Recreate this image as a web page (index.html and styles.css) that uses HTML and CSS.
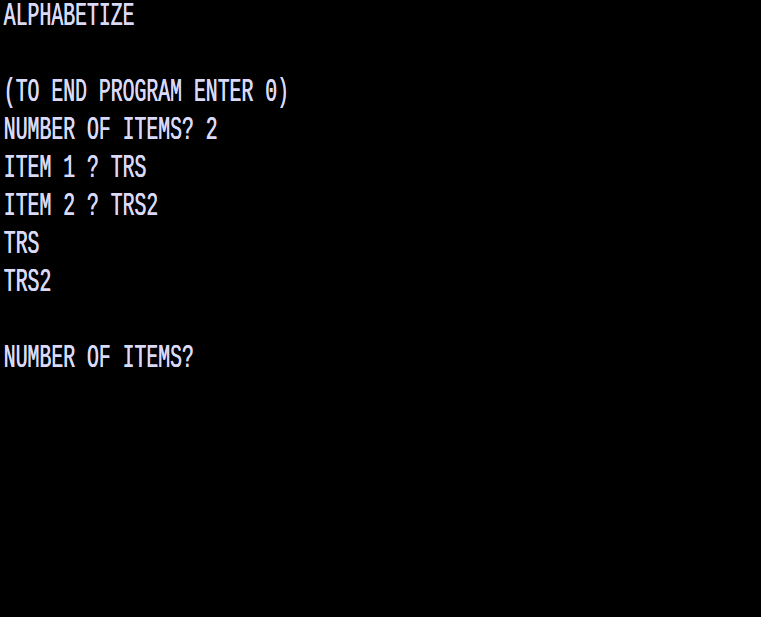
FILE: index.html
```html
<!DOCTYPE html>
<html>
<head>
<meta charset="utf-8">
<link rel="stylesheet" href="styles.css">
</head>
<body>
<div class="screen">
<div class="line">ALPHABETIZE</div>
<div class="line"> </div>
<div class="line">(TO END PROGRAM ENTER 0)</div>
<div class="line">NUMBER OF ITEMS? 2</div>
<div class="line">ITEM 1 ? TRS</div>
<div class="line">ITEM 2 ? TRS2</div>
<div class="line">TRS</div>
<div class="line">TRS2</div>
<div class="line"> </div>
<div class="line">NUMBER OF ITEMS?</div>
</div>
</body>
</html>
```
FILE: styles.css
```css
html, body {
  margin: 0;
  padding: 0;
  background: #000;
  width: 761px;
  height: 617px;
  overflow: hidden;
}
.screen {
  padding-left: 6px;
  transform: scaleX(0.6);
  transform-origin: 0 0;
  width: 700px;
  color: #dadaf8;
  font-family: "Liberation Mono", "DejaVu Sans Mono", monospace;
  font-size: 33px;
  text-shadow: 0.7px 0 0 #dadaf8;
}
.line {
  height: 38px;
  line-height: 34px;
  white-space: pre;
}
```
